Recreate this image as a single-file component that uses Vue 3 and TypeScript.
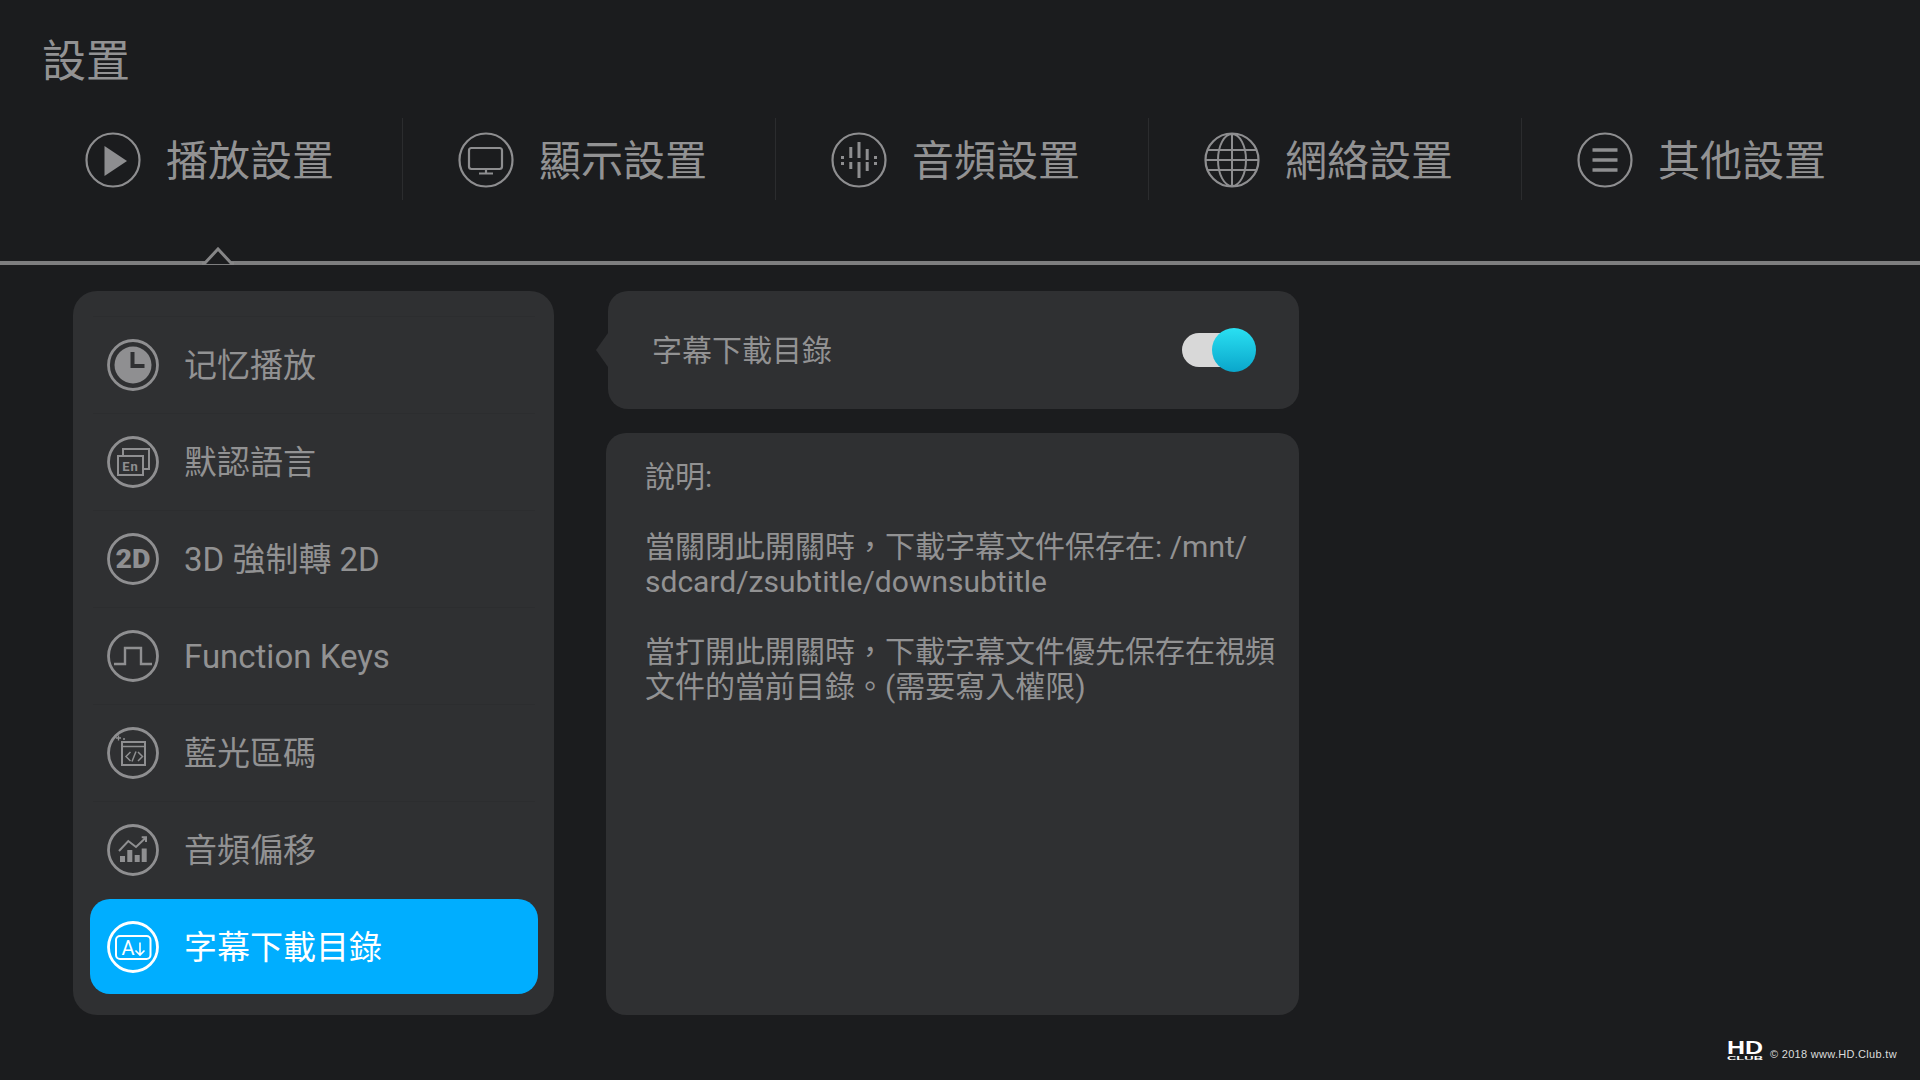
<template>
  <div class="screen">
    <h1 class="title">設置</h1>

    <nav class="tabs">
      <div v-for="tab in tabs" :key="tab.icon" class="tab">
        <svg class="tab-icon" viewBox="0 0 56 56" fill="none" stroke="currentColor" stroke-width="2.200">
          <circle cx="28" cy="28" r="26.500" />
          <polygon v-if="tab.icon === 'play'" points="19.500,14 42,29 19.500,44" fill="currentColor" stroke="none" />
          <g v-else-if="tab.icon === 'display'">
            <rect x="11" y="16" width="33" height="21" rx="2.500" />
            <path d="M28 37v4M21 41.500h14" />
          </g>
          <g v-else-if="tab.icon === 'audio'" stroke-width="3">
            <path d="M11.500 24v3M11.500 30v3M19.800 15v11M19.800 30v7M28 10v16M28 30v16M36.200 17v11M36.200 30v9M44.500 24v3M44.500 30v3" />
          </g>
          <g v-else-if="tab.icon === 'globe'" stroke-width="2">
            <ellipse cx="28" cy="28" rx="14" ry="26" />
            <path d="M28 2v52M3.500 18h49M2 28h52M3.500 38h49" />
          </g>
          <path v-else d="M15.500 18h25M15.500 28h25M15.500 38h25" stroke-width="3.600" />
        </svg>
        <span class="tab-label">{{ tab.label }}</span>
      </div>
    </nav>

    <div class="divider">
      <svg class="notch" viewBox="0 0 32 18" width="32" height="18">
        <polygon points="2,17 16,2 30,17" fill="#1b1c1e" />
        <path d="M0 16.500h2.500L16 2l13.500 14.500H32" fill="none" stroke="#868687" stroke-width="3" />
      </svg>
    </div>

    <main class="content">
      <ul class="menu">
        <li v-for="item in items" :key="item.icon" class="row" :class="{ active: item.icon === activeIcon }">
          <svg class="row-icon" viewBox="0 0 52 52" fill="none" stroke="currentColor" stroke-width="1.600">
            <circle cx="26" cy="26" r="24.500" stroke-width="2.800" />
            <g v-if="item.icon === 'clock'">
              <circle cx="26" cy="26" r="18.500" fill="currentColor" stroke="none" />
              <path d="M25.500 13v14h12" stroke="#2f3032" stroke-width="4" />
            </g>
            <g v-else-if="item.icon === 'lang'" stroke-width="2">
              <path d="M16 20v-7h26v20h-6" />
              <rect x="11" y="20" width="25" height="19" />
              <text x="23.500" y="34.500" class="en">En</text>
            </g>
            <text v-else-if="item.icon === '2d'" x="8.500" y="35" textLength="35" lengthAdjust="spacingAndGlyphs" class="two-d">2D</text>
            <path v-else-if="item.icon === 'pulse'" d="M7 34h11V18h16v16h11" stroke-width="2.400" />
            <g v-else-if="item.icon === 'code'" stroke-width="2">
              <rect x="15" y="15" width="23" height="23" />
              <path d="M15 19.500h23M23.500 25l-4.500 4.500 4.500 4.500M31 25l4.500 4.500-4.500 4.500M29 24.500l-4 10" stroke-width="1.500" />
              <path d="M11.500 8.500v5M9 11h5M16 12h2M14 15.500h1.500" stroke-width="1.300" />
            </g>
            <g v-else-if="item.icon === 'chart'">
              <path d="M13 32h5v6h-5zM20.300 26h5v12h-5zM27.700 31h5v7h-5zM34.700 24.500h5V38h-5z" fill="currentColor" stroke="none" />
              <path d="M12 27l9.300-10 7.700 6 10-9.500M34.700 13.300H39V18" stroke-width="2" />
            </g>
            <g v-else stroke-width="2">
              <rect x="9" y="15" width="34.500" height="23" rx="4" />
              <text x="21" y="34" class="letter">A</text>
              <path d="M33 21.500V34M28.500 29.500L33 34l4.500-4.500" stroke-width="1.600" />
            </g>
          </svg>
          <span class="row-label">{{ item.label }}</span>
        </li>
      </ul>

      <section class="detail">
        <div class="setting-card">
          <span class="setting-label">字幕下載目錄</span>
          <div class="toggle"><span class="knob"></span></div>
        </div>
        <div class="info-card">
          <p>說明:</p>
          <p>當關閉此開關時&#65292;下載字幕文件保存在: /mnt/<br />sdcard/zsubtitle/downsubtitle</p>
          <p>當打開此開關時&#65292;下載字幕文件優先保存在視頻<br />文件的當前目錄。(需要寫入權限)</p>
        </div>
      </section>
    </main>

    <footer class="watermark">
      <svg class="hd-logo" viewBox="0 0 36 20" width="36" height="20">
        <text x="0" y="13.500" textLength="36" lengthAdjust="spacingAndGlyphs" class="logo-hd">HD</text>
        <text x="0" y="19.500" textLength="36" lengthAdjust="spacingAndGlyphs" class="logo-club">CLUB</text>
      </svg>
      <span>© 2018 www.HD.Club.tw</span>
    </footer>
  </div>
</template>

<script setup lang="ts">
interface Tab {
  icon: string;
  label: string;
}

interface MenuItem {
  icon: string;
  label: string;
}

const tabs: Tab[] = [
  { icon: 'play', label: '播放設置' },
  { icon: 'display', label: '顯示設置' },
  { icon: 'audio', label: '音頻設置' },
  { icon: 'globe', label: '網絡設置' },
  { icon: 'other', label: '其他設置' },
];

const items: MenuItem[] = [
  { icon: 'clock', label: '记忆播放' },
  { icon: 'lang', label: '默認語言' },
  { icon: '2d', label: '3D 強制轉 2D' },
  { icon: 'pulse', label: 'Function Keys' },
  { icon: 'code', label: '藍光區碼' },
  { icon: 'chart', label: '音頻偏移' },
  { icon: 'subtitle', label: '字幕下載目錄' },
];

const activeIcon = 'subtitle';
</script>

<style>
html,
body {
  margin: 0;
  background: #1b1c1e;
}
</style>

<style scoped>
.screen {
  position: relative;
  width: 1920px;
  height: 1080px;
  overflow: hidden;
  background: #1b1c1e;
  color: #929293;
  font-family: Roboto, "Noto Sans CJK TC", sans-serif;
}

.title {
  margin: 0;
  height: 118px;
  padding: 33px 0 0 42px;
  box-sizing: border-box;
  font-size: 44px;
  font-weight: 400;
  line-height: 58px;
}

.tabs {
  display: flex;
  height: 82px;
  padding-left: 30px;
}

.tab {
  display: flex;
  align-items: center;
  gap: 25px;
  box-sizing: border-box;
  width: 373px;
  padding-left: 55px;
  padding-top: 2px;
  border-right: 1px solid #2b2c2e;
}

.tab:last-child {
  border-right: none;
}

.tab-icon {
  width: 56px;
  height: 56px;
  flex: none;
  color: #8e8e90;
}

.tab-label {
  font-size: 42px;
  line-height: 56px;
  padding-top: 4px;
}

.divider {
  position: relative;
  height: 4px;
  margin-top: 61px;
  background: #7e7e7f;
}

.notch {
  position: absolute;
  left: 202px;
  top: -14px;
}

.content {
  display: flex;
  gap: 52px;
  margin-top: 26px;
  padding-left: 73px;
}

.menu {
  width: 481px;
  box-sizing: border-box;
  margin: 0;
  padding: 25px 16px 20px 17px;
  list-style: none;
  background: #2f3032;
  border-radius: 24px;
}

.row {
  display: flex;
  align-items: center;
  gap: 25px;
  height: 97px;
  box-sizing: border-box;
  margin: 0 3px;
  padding-left: 14px;
  border-top: 1px solid #2c2d2f;
}

.row.active {
  height: 95px;
  margin: 1px 0 0;
  padding-left: 17px;
  border-top: none;
  border-radius: 20px;
  background: #00aeff;
  color: #fff;
}

.row-icon {
  width: 52px;
  height: 52px;
  flex: none;
  color: #8f8f91;
}

.row.active .row-icon {
  color: #fff;
}

.row-label {
  font-size: 33px;
  line-height: 44px;
  padding-top: 2px;
}

.en,
.two-d,
.letter {
  fill: currentColor;
  stroke: none;
  font-family: Roboto, sans-serif;
}

.en {
  font-size: 13px;
  font-weight: 700;
  text-anchor: middle;
  letter-spacing: 1px;
}

.two-d {
  font-size: 26px;
  font-weight: 900;
}

.letter {
  font-size: 20px;
  font-weight: 400;
  text-anchor: middle;
}

.detail {
  display: flex;
  flex-direction: column;
  gap: 24px;
  width: 693px;
  font-size: 30px;
}

.setting-card {
  position: relative;
  display: flex;
  align-items: center;
  justify-content: space-between;
  height: 118px;
  margin-left: 2px;
  padding: 0 59px 0 44px;
  background: #2f3032;
  border-radius: 20px;
}

.setting-label {
  margin-top: -5px;
}

.setting-card::before {
  content: '';
  position: absolute;
  left: -12px;
  top: 42px;
  width: 12px;
  height: 34px;
  background: #2f3032;
  clip-path: polygon(100% 0, 0 50%, 100% 100%);
}

.toggle {
  position: relative;
  width: 58px;
  height: 34px;
  border-radius: 17px;
  background: #d8d8d8;
}

.knob {
  position: absolute;
  left: 30px;
  top: -5px;
  width: 44px;
  height: 44px;
  border-radius: 50%;
  background: linear-gradient(#2ae0f2, #0aa6cb);
}

.info-card {
  height: 582px;
  box-sizing: border-box;
  padding: 26px 0 0 39px;
  background: #2f3032;
  border-radius: 20px;
  line-height: 35px;
}

.info-card p {
  margin: 0 0 35px;
}

.watermark {
  position: absolute;
  left: 1727px;
  top: 1040px;
  display: flex;
  align-items: flex-start;
  gap: 7px;
  color: #dcdcdc;
  font-family: "Liberation Sans", Arial, sans-serif;
  font-size: 11px;
  line-height: 30px;
}

.watermark span {
  margin-top: -1px;
  letter-spacing: 0.3px;
}

.hd-logo {
  flex: none;
  overflow: visible;
}

.logo-hd,
.logo-club {
  fill: #fff;
  font-family: "Liberation Sans", Arial, sans-serif;
}

.logo-hd {
  font-size: 18px;
  font-weight: 700;
}

.logo-club {
  font-size: 6px;
  font-weight: 700;
}
</style>
